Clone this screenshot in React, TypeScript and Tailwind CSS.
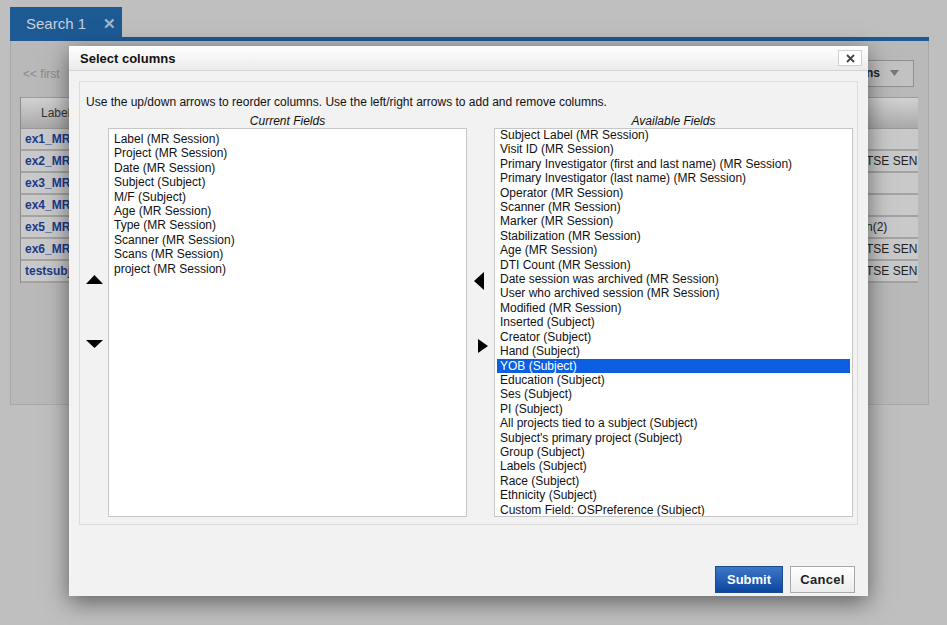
import React from 'react';

const currentFields = [
    'Label (MR Session)',
    'Project (MR Session)',
    'Date (MR Session)',
    'Subject (Subject)',
    'M/F (Subject)',
    'Age (MR Session)',
    'Type (MR Session)',
    'Scanner (MR Session)',
    'Scans (MR Session)',
    'project (MR Session)',
];

const availableFields = [
    'Subject Label (MR Session)',
    'Visit ID (MR Session)',
    'Primary Investigator (first and last name) (MR Session)',
    'Primary Investigator (last name) (MR Session)',
    'Operator (MR Session)',
    'Scanner (MR Session)',
    'Marker (MR Session)',
    'Stabilization (MR Session)',
    'Age (MR Session)',
    'DTI Count (MR Session)',
    'Date session was archived (MR Session)',
    'User who archived session (MR Session)',
    'Modified (MR Session)',
    'Inserted (Subject)',
    'Creator (Subject)',
    'Hand (Subject)',
    'YOB (Subject)',
    'Education (Subject)',
    'Ses (Subject)',
    'PI (Subject)',
    'All projects tied to a subject (Subject)',
    "Subject's primary project (Subject)",
    'Group (Subject)',
    'Labels (Subject)',
    'Race (Subject)',
    'Ethnicity (Subject)',
    'Custom Field: OSPreference (Subject)',
];

const rows = [
    { label: 'ex1_MR', last: '' },
    { label: 'ex2_MR', last: 'TSE SEN' },
    { label: 'ex3_MR', last: '' },
    { label: 'ex4_MR', last: '' },
    { label: 'ex5_MR', last: 'n(2)' },
    { label: 'ex6_MR', last: 'TSE SEN' },
    { label: 'testsubject', last: 'TSE SEN' },
];

const Background = () => (
    <div className="pt-[7px] pl-[10px]">
        <div className="flex items-center gap-[17px] w-[112px] h-[30px] bg-[#1d5a94] pl-[16px] pt-[4px] text-[15px] text-[#c6d0da]">
            <span>Search 1</span>
            <span className="font-bold text-[#a9b6c3]">✕</span>
        </div>
        <div className="w-[919px] h-[4px] bg-[#1d5a94]" />
        <div className="w-[919px] h-[364px] bg-[#b9b9b9] border-x border-b border-[#a9a9a9] pl-[9px] pr-[10px]">
            <div className="flex items-center justify-between h-[56px]">
                <span className="pl-[3px] pt-[9px] text-[12px] text-[#8a8a8a]">&lt;&lt; first</span>
                <div className="flex items-center justify-end gap-[10px] w-[100px] h-[27px] mt-[8px] mr-[4px] border border-[#8f8f8f] bg-[#c2c2c2] pr-[14px] text-[12px] font-bold text-[#222]">
                    <span>Options</span>
                    <svg width="9" height="6" viewBox="0 0 9 6"><path d="M0 0h9L4.5 6z" fill="#777" /></svg>
                </div>
            </div>
            <div className="border-l border-[#8c8c8c]">
                <div className="flex h-[32px] items-center border-y border-[#9a9a9a] bg-gradient-to-b from-[#d2d2d2] to-[#a9a9a9] text-[12px] text-[#333]">
                    <span className="pl-[20px]">Label</span>
                </div>
                {rows.map((r) => (
                    <div key={r.label} className="flex h-[22px] items-center justify-between border-b-2 border-[#a3a3a3] bg-[#c9c9c9] text-[12px]">
                        <span className="pl-[4px] font-bold text-[#1b3a8a]">{r.label}</span>
                        <span className="w-[52px] whitespace-nowrap text-[#222]">{r.last}</span>
                    </div>
                ))}
            </div>
        </div>
    </div>
);

const Triangle = ({ dir }: { dir: 'up' | 'down' | 'left' | 'right' }) => {
    if (dir === 'up') return <svg width="17" height="9" viewBox="0 0 17 9"><path d="M8.5 0L17 9H0z" fill="#000" /></svg>;
    if (dir === 'down') return <svg width="17" height="8" viewBox="0 0 17 8"><path d="M0 0h17L8.5 8z" fill="#000" /></svg>;
    if (dir === 'left') return <svg width="10" height="18" viewBox="0 0 10 18"><path d="M10 0v18L0 9z" fill="#000" /></svg>;
    return <svg width="10" height="14" viewBox="0 0 10 14"><path d="M0 0l10 7-10 7z" fill="#000" /></svg>;
};

const Dialog = () => (
    <div className="absolute left-[69px] top-[46px] w-[799px] h-[550px] bg-[#f2f2f2] shadow-[0_6px_22px_rgba(0,0,0,0.5)]">
        <div className="flex items-center justify-between h-[25px] px-[11px] pr-[6px] border-b border-[#d4d4d4] bg-gradient-to-b from-[#ffffff] to-[#ebebeb]">
            <span className="pt-[1px] text-[13px] font-bold text-[#111]">Select columns</span>
            <div className="flex items-center justify-center w-[24px] h-[16px] border border-[#cfcfcf] bg-white">
                <svg width="9" height="9" viewBox="0 0 9 9"><path d="M1 1l7 7M8 1L1 8" stroke="#444" strokeWidth="1.8" /></svg>
            </div>
        </div>
        <div className="px-[10px] pt-[10px]">
            <div className="h-[444px] border border-[#dcdcdc] pl-[6px] pr-[4px] pt-[13px] text-[12px] text-[#111]">
                <p className="leading-[14px]">Use the up/down arrows to reorder columns. Use the left/right arrows to add and remove columns.</p>
                <div className="grid grid-cols-[22px_359px_27px_359px] mt-[5px]">
                    <div />
                    <div className="text-center italic leading-[14px]">Current Fields</div>
                    <div />
                    <div className="text-center italic leading-[14px]">Available Fields</div>
                    <div className="flex flex-col pt-[147px] gap-[56px]">
                        <Triangle dir="up" />
                        <Triangle dir="down" />
                    </div>
                    <div className="h-[389px] border border-[#c6c6c6] bg-white pt-[3px] px-[2px] leading-[14.4px]">
                        {currentFields.map((f) => (
                            <div key={f} className="pl-[3px] whitespace-nowrap">{f}</div>
                        ))}
                    </div>
                    <div className="flex flex-col pt-[144px]">
                        <div className="pl-[7px]"><Triangle dir="left" /></div>
                        <div className="pl-[11px] pt-[49px]"><Triangle dir="right" /></div>
                    </div>
                    <div className="h-[389px] overflow-hidden border border-[#c6c6c6] bg-white px-[2px] leading-[14.4px]">
                        <div className="-mt-[1px]">
                            {availableFields.map((f) => (
                                <div key={f} className={f === 'YOB (Subject)' ? 'pl-[3px] whitespace-nowrap bg-[#0b5fe0] text-white' : 'pl-[3px] whitespace-nowrap'}>
                                    {f}
                                </div>
                            ))}
                        </div>
                    </div>
                </div>
            </div>
            <div className="flex justify-end gap-[7px] mt-[41px] pr-[3px]">
                <button className="w-[68px] h-[27px] border border-[#1c4a8c] bg-gradient-to-b from-[#3d77c8] to-[#0a479f] text-[13px] font-bold text-white">Submit</button>
                <button className="w-[65px] h-[27px] border border-[#a8a8a8] bg-gradient-to-b from-[#ffffff] to-[#ececec] text-[13px] font-bold tracking-[0.3px] text-[#222]">Cancel</button>
            </div>
        </div>
    </div>
);

export default function App() {
    return (
        <div className="relative w-[947px] h-[625px] overflow-hidden bg-[#bfbfbf] font-['Liberation_Sans',Arial,sans-serif]">
            <Background />
            <Dialog />
        </div>
    );
}
